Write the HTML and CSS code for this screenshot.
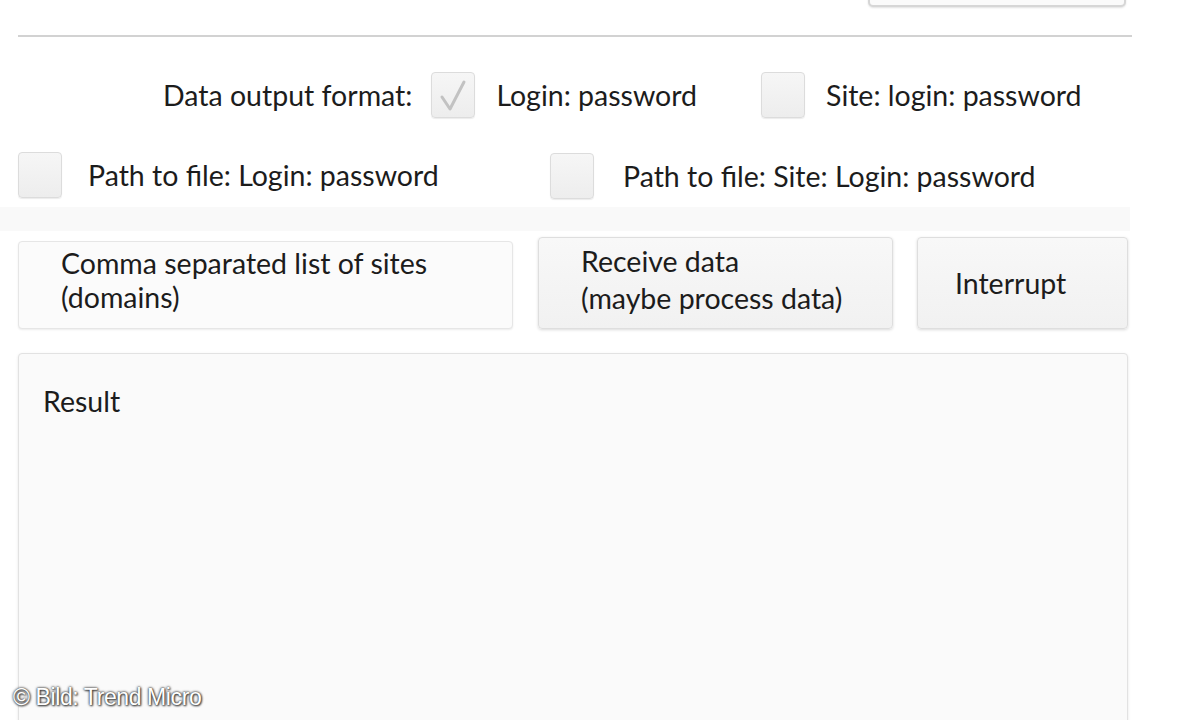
FILE: index.html
```html
<!DOCTYPE html>
<html lang="en">
<head>
<meta charset="utf-8">
<title>Data output</title>
<link rel="stylesheet" href="styles.css">
</head>
<body>
<div class="page">
  <div class="topbar"><div class="topbtn"></div></div>
  <div class="rule"></div>

  <div class="row1">
    <span class="lbl">Data output format:</span>
    <span class="cb cb-a checked">
      <svg viewBox="0 0 44 46" width="44" height="46"><path d="M11 25 L19 37 L33 10" fill="none" stroke="#c2c2c2" stroke-width="3" stroke-linecap="round" stroke-linejoin="round"/></svg>
    </span>
    <span class="lbl lbl-a">Login: password</span>
    <span class="cb cb-b"></span>
    <span class="lbl lbl-b">Site: login: password</span>
  </div>

  <div class="row2">
    <div class="grp grp-1">
      <span class="cb"></span>
      <span class="lbl">Path to file: Login: password</span>
    </div>
    <div class="grp grp-2">
      <span class="cb"></span>
      <span class="lbl">Path to file: Site: Login: password</span>
    </div>
  </div>

  <div class="band"></div>

  <div class="row3">
    <div class="field">Comma separated list of sites<br>(domains)</div>
    <div class="btn btn-recv">Receive data<br>(maybe process data)</div>
    <div class="btn btn-int">Interrupt</div>
  </div>

  <div class="result">Result</div>
</div>
<div class="credit">© Bild: Trend Micro</div>
</body>
</html>
```

FILE: styles.css
```css
html, body {
  margin: 0;
  padding: 0;
  background: #ffffff;
  height: 720px;
  overflow: hidden;
}
body {
  font-family: Lato, "Open Sans", sans-serif;
  font-size: 28.5px;
  color: #1c1c1c;
  position: relative;
}
.page {
  padding-left: 18px;
}
.topbar {
  height: 35px;
  width: 1110px;
  display: flex;
  justify-content: flex-end;
}
.topbtn {
  width: 254px;
  height: 24px;
  margin-top: -21px;
  margin-right: 2px;
  border: 2px solid #d6d6d6;
  border-radius: 5px;
  background: #fafafa;
  box-shadow: 0 1px 2px rgba(0,0,0,0.12);
}
.rule {
  width: 1114px;
  height: 2px;
  background: #d2d2d2;
}
.cb {
  display: inline-block;
  width: 44px;
  height: 46px;
  box-sizing: border-box;
  border: 1px solid #dcdcdc;
  border-radius: 4px;
  background: linear-gradient(#f6f6f6, #ededed);
  box-shadow: 0 1px 1px rgba(0,0,0,0.08);
  flex: none;
}
.cb svg { display: block; margin: -1px; }
.row1 {
  margin-top: 35px;
  height: 46px;
  display: flex;
  align-items: center;
  padding-left: 145px;
}
.cb-a { margin-left: 19px; }
.lbl-a { margin-left: 21px; }
.cb-b { margin-left: 64px; }
.lbl-b { margin-left: 21px; }
.row2 {
  margin-top: 34px;
  display: flex;
}
.grp {
  display: flex;
  align-items: center;
  height: 46px;
}
.grp-1 { width: 532px; }
.grp-1 .lbl { margin-left: 26px; }
.grp-2 { margin-top: 1px; }
.grp-2 .lbl { margin-left: 29px; }
.band {
  margin-left: -18px;
  margin-top: 8px;
  width: 1130px;
  height: 24px;
  background: #f9f9f9;
}
.row3 {
  margin-top: 6px;
  display: flex;
  align-items: flex-start;
}
.field {
  width: 495px;
  height: 88px;
  margin-top: 4px;
  box-sizing: border-box;
  padding: 4px 0 0 42px;
  line-height: 34px;
  border: 1px solid #e6e6e6;
  border-radius: 4px;
  background: #fbfbfb;
  box-shadow: 0 1px 2px rgba(0,0,0,0.08);
}
.btn {
  height: 92px;
  box-sizing: border-box;
  border: 1px solid #dedede;
  border-radius: 4px;
  background: linear-gradient(#f8f8f8, #f1f1f1);
  box-shadow: 0 1px 3px rgba(0,0,0,0.15);
}
.btn-recv {
  width: 355px;
  margin-left: 25px;
  padding: 5px 0 0 42px;
  line-height: 37px;
}
.btn-int {
  width: 211px;
  margin-left: 24px;
  padding-left: 37px;
  display: flex;
  align-items: center;
}
.result {
  margin-top: 24px;
  width: 1110px;
  height: 400px;
  box-sizing: border-box;
  padding: 32px 0 0 24px;
  line-height: 30px;
  border: 1px solid #e2e2e2;
  border-radius: 4px;
  background: #fafafa;
  box-shadow: 0 1px 3px rgba(0,0,0,0.1);
}
.credit {
  position: absolute;
  left: 13px;
  top: 684px;
  font-family: "Liberation Sans", Arial, sans-serif;
  font-size: 23px;
  color: #ffffff;
  letter-spacing: -0.4px;
  text-shadow: 0 0 2px #333, 0 0 3px #555, 1px 1px 2px #444;
}
```
